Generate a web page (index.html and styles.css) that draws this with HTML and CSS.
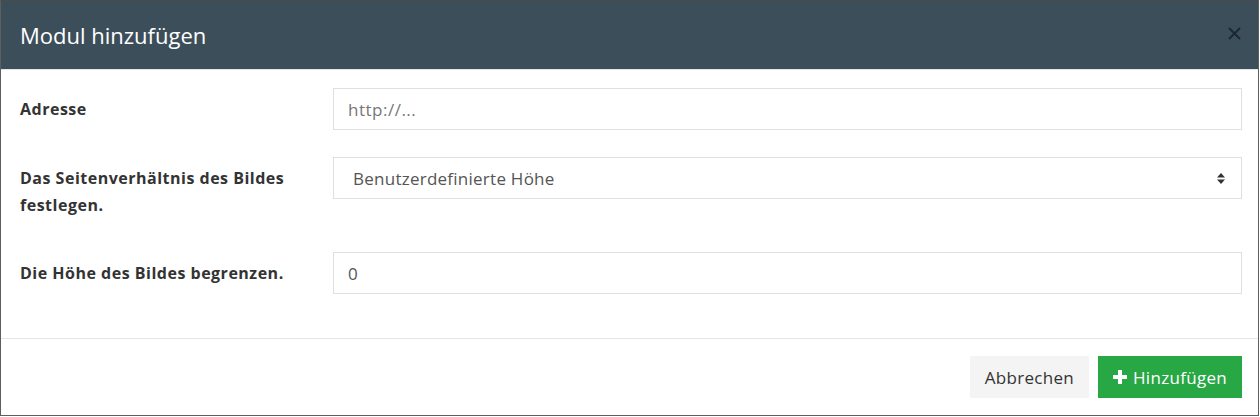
FILE: index.html
```html
<!DOCTYPE html>
<html lang="de">
<head>
<meta charset="utf-8">
<title>Modul hinzufügen</title>
<link rel="stylesheet" href="styles.css">
</head>
<body>
<div class="modal">
  <div class="modal-header">
    <h4 class="modal-title">Modul hinzufügen</h4>
    <svg class="close" width="13" height="13" viewBox="0 0 13 13"><path d="M1 1 L12 12 M12 1 L1 12" stroke="#1c2831" stroke-width="2" fill="none"/></svg>
  </div>
  <div class="modal-body">
    <div class="form-row">
      <label class="form-label">Adresse</label>
      <div class="form-field">
        <div class="input placeholder">http://...</div>
      </div>
    </div>
    <div class="form-row">
      <label class="form-label">Das Seitenverhältnis des Bildes festlegen.</label>
      <div class="form-field">
        <div class="input select">
          <span>Benutzerdefinierte Höhe</span>
          <svg class="caret" width="8" height="11" viewBox="0 0 8 11"><path d="M4 0 L8 4.5 L0 4.5 Z M0 6.5 L8 6.5 L4 11 Z" fill="#333"/></svg>
        </div>
      </div>
    </div>
    <div class="form-row">
      <label class="form-label">Die Höhe des Bildes begrenzen.</label>
      <div class="form-field">
        <div class="input">0</div>
      </div>
    </div>
  </div>
  <div class="modal-footer">
    <button class="btn btn-default">Abbrechen</button>
    <button class="btn btn-success"><svg class="plus" width="14" height="14" viewBox="0 0 14 14"><path d="M5 0h4v5h5v4H9v5H5V9H0V5h5z" fill="#fff"/></svg>Hinzufügen</button>
  </div>
</div>
</body>
</html>
```
FILE: styles.css
```css
* { box-sizing: border-box; }
html, body { margin: 0; padding: 0; background: #fff; }
body {
  font-family: "Open Sans", "DejaVu Sans", sans-serif;
  color: #333;
  width: 1260px;
  height: 417px;
  overflow: hidden;
}
.modal {
  width: 1259px;
  height: 416px;
  border: 1px solid #5e5e5e;
  border-top-color: #4a4a4a;
  background: #fff;
  display: flex;
  flex-direction: column;
}
.modal-header {
  height: 69px;
  background: #3d4e5b;
  border-bottom: 1px solid #e5e5e5;
  display: flex;
  align-items: center;
  justify-content: space-between;
  padding: 0 17px 0 19px;
}
.modal-title {
  margin: 0;
  font-weight: 400;
  font-size: 22px;
  color: #fff;
  line-height: 1;
  padding-bottom: 1px;
}
.close {
  display: block;
  margin-bottom: 3px;
}
.modal-body {
  padding: 18px 16px 17px 19px;
  border-bottom: 1px solid #e5e5e5;
}
.form-row {
  display: grid;
  grid-template-columns: 313px 1fr;
  margin-bottom: 27px;
}
.form-label {
  font-weight: 700;
  font-size: 16px;
  letter-spacing: 0.5px;
  line-height: 27px;
  padding: 8px 20px 6px 0;
}
.form-field { min-width: 0; }
.input {
  height: 42px;
  border: 1px solid #dcdfe3;
  padding: 0 14px;
  font-size: 17px;
  display: flex;
  align-items: center;
  color: #555;
}
.placeholder { color: #777; letter-spacing: 0.5px; }
.select {
  padding: 0 16px 0 19px;
  justify-content: space-between;
}
.select span { letter-spacing: 0.25px; }
.modal-footer {
  flex: 1;
  display: flex;
  justify-content: flex-end;
  align-items: flex-start;
  gap: 9px;
  padding: 17px 16px 0 0;
}
.btn {
  height: 42px;
  border: 0;
  font-family: inherit;
  font-size: 17px;
  letter-spacing: 0.3px;
  padding: 0 15px;
  display: flex;
  align-items: center;
  cursor: pointer;
}
.btn-default {
  background: #f4f4f4;
  color: #333;
}
.btn-success {
  background: #28a745;
  color: #fff;
  padding: 0 15px 0 15px;
}
.plus { margin-right: 6px; }
```
